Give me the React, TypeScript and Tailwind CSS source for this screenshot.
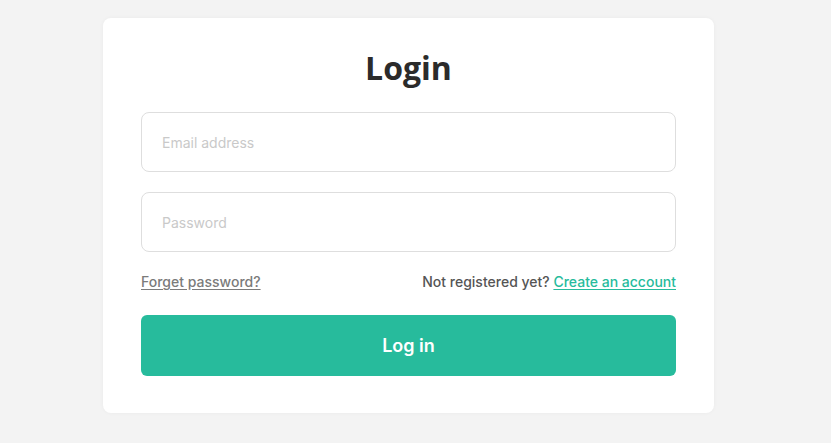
import React from "react";

export default function App() {
  return (
    <div className="min-h-[443px] w-full bg-[#f3f3f3] flex justify-center pt-[18px] pr-[14px]" style={{ fontFamily: "Inter, 'Noto Sans', sans-serif" }}>
      <div className="w-[611px] h-[395px] bg-white rounded-[8px] shadow-[0_0_4px_rgba(0,0,0,0.04)] px-[38px] pt-[30px] flex flex-col">
        <h1 className="text-center text-[32px] font-bold leading-[40px] text-[#2b2b2b]" style={{ fontFamily: "'Open Sans', sans-serif" }}>Login</h1>
        <input
          placeholder="Email address"
          className="mt-[24px] h-[60px] w-full rounded-[8px] border border-[#dedede] px-[20px] text-[14px] text-[#333] placeholder:text-[#c9c9c9] outline-none"
        />
        <input
          placeholder="Password"
          type="password"
          className="mt-[20px] h-[60px] w-full rounded-[8px] border border-[#dedede] px-[20px] text-[14px] text-[#333] placeholder:text-[#c9c9c9] outline-none"
        />
        <div className="mt-[20px] flex justify-between items-center text-[14px] leading-[20px] font-medium">
          <a href="#" className="text-[#7b7b7b] underline underline-offset-2">Forget password?</a>
          <span className="text-[#555]">
            Not registered yet?{" "}
            <a href="#" className="text-[#27bb9c] underline underline-offset-2">Create an account</a>
          </span>
        </div>
        <button className="mt-[23px] h-[61px] w-full rounded-[6px] bg-[#27bb9c] text-white text-[18px] font-semibold">Log in</button>
      </div>
    </div>
  );
}
